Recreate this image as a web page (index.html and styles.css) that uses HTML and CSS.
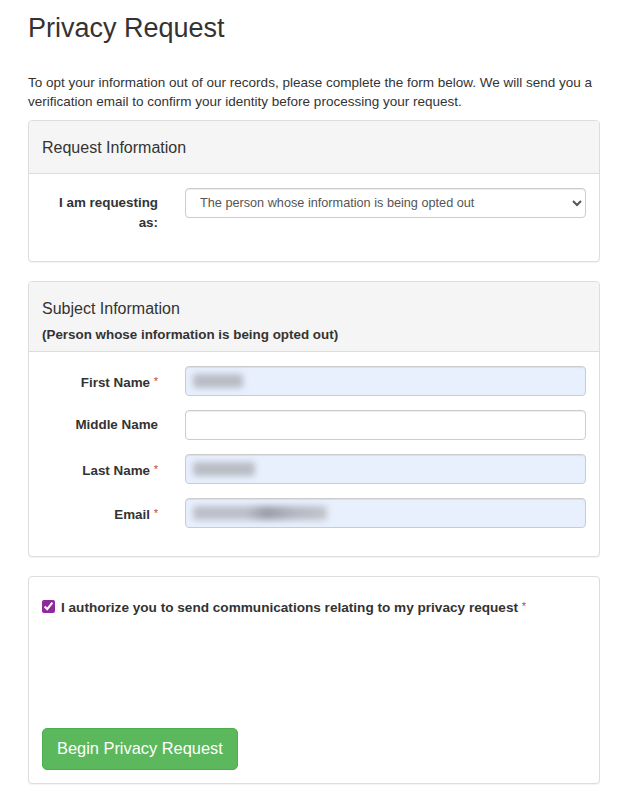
FILE: index.html
```html
<!DOCTYPE html>
<html lang="en">
<head>
<meta charset="utf-8">
<title>Privacy Request</title>
<link rel="stylesheet" href="styles.css">
</head>
<body>
<main class="page">
  <h2 class="page-title">Privacy Request</h2>
  <p class="intro">To opt your information out of our records, please complete the form below. We will send you a verification email to confirm your identity before processing your request.</p>

  <section class="panel">
    <div class="panel-heading">
      <h3 class="panel-title">Request Information</h3>
    </div>
    <div class="panel-body">
      <div class="form-group">
        <label class="control-label" for="requester">I am requesting as:</label>
        <select id="requester" class="form-control select">
          <option>The person whose information is being opted out</option>
        </select>
      </div>
    </div>
  </section>

  <section class="panel">
    <div class="panel-heading with-sub">
      <h3 class="panel-title">Subject Information</h3>
      <div class="panel-sub">(Person whose information is being opted out)</div>
    </div>
    <div class="panel-body">
      <div class="form-group">
        <label class="control-label">First Name <span class="req">*</span></label>
        <div class="form-control filled"><span class="blur b-first"></span></div>
      </div>
      <div class="form-group">
        <label class="control-label" for="middle">Middle Name</label>
        <input id="middle" class="form-control" type="text">
      </div>
      <div class="form-group">
        <label class="control-label">Last Name <span class="req">*</span></label>
        <div class="form-control filled"><span class="blur b-last"></span></div>
      </div>
      <div class="form-group">
        <label class="control-label">Email <span class="req">*</span></label>
        <div class="form-control filled"><span class="blur b-email"></span></div>
      </div>
    </div>
  </section>

  <section class="panel">
    <div class="panel-body consent">
      <label class="checkbox">
        <input type="checkbox" checked>
        <span>I authorize you to send communications relating to my privacy request <span class="req">*</span></span>
      </label>
      <div class="captcha-slot"></div>
      <button class="btn-success" type="button">Begin Privacy Request</button>
    </div>
  </section>
</main>
</body>
</html>
```

FILE: styles.css
```css
* { box-sizing: border-box; }

html, body {
  margin: 0;
  padding: 0;
  background: #fff;
}

body {
  font-family: "Liberation Sans", Arial, Helvetica, sans-serif;
  font-size: 13.5px;
  line-height: 19px;
  color: #333;
}

.page {
  width: 572px;
  margin: 0 0 0 28px;
  padding-top: 14px;
  padding-bottom: 14px;
}

.page-title {
  margin: 0;
  font-size: 27px;
  font-weight: 400;
  line-height: 1.1;
  color: #333;
}

.intro {
  margin: 29px 0 9px;
  font-size: 13.5px;
  line-height: 19px;
}

.panel {
  border: 1px solid #ddd;
  border-radius: 4px;
  background: #fff;
  margin-bottom: 19px;
  box-shadow: 0 1px 1px rgba(0,0,0,0.05);
}
.panel:last-child { margin-bottom: 0; }

.panel-heading {
  background: #f5f5f5;
  border-bottom: 1px solid #ddd;
  border-radius: 3px 3px 0 0;
  padding: 18px 13px 17px;
}
.panel-heading.with-sub { padding-bottom: 8px; }

.panel-title {
  margin: 0;
  font-size: 16px;
  font-weight: 400;
  line-height: 17.6px;
  color: #333;
}

.panel-sub {
  margin-top: 9px;
  font-size: 13.4px;
  font-weight: 700;
  line-height: 16px;
}

.panel-body {
  padding: 14px 13px;
}

.form-group {
  display: grid;
  grid-template-columns: 116px 1fr;
  column-gap: 27px;
  align-items: start;
  margin-bottom: 14px;
}

.control-label {
  text-align: right;
  font-weight: 700;
  font-size: 13.4px;
  line-height: 20px;
  padding-top: 5px;
  color: #333;
}

.req {
  color: #b94a48;
  font-size: 11px;
  font-weight: 400;
  vertical-align: 2px;
}

.form-control {
  display: block;
  width: 100%;
  height: 30px;
  margin: 0;
  padding: 4px 10px;
  font-family: "Liberation Sans", Arial, Helvetica, sans-serif;
  font-size: 12.7px;
  color: #555;
  background: #fff;
  border: 1px solid #ccc;
  border-radius: 4px;
  box-shadow: inset 0 1px 1px rgba(0,0,0,0.075);
}

.select {
  padding: 4px 10px;
}

.form-control.filled {
  background: #e8f0fe;
  display: flex;
  align-items: center;
  padding-left: 7px;
}

.blur {
  display: block;
  height: 14px;
  border-radius: 3px;
  background: #b9bcc4;
  filter: blur(3px);
}
.b-first { width: 50px; }
.b-last { width: 62px; }
.b-email {
  width: 134px;
  background: linear-gradient(90deg, #bcbfc8 0%, #bcbfc8 40%, #9a9da6 55%, #b4b7c0 75%, #c2c5cd 100%);
}

.consent {
  padding-top: 19px;
  padding-bottom: 13px;
}

.checkbox {
  display: flex;
  align-items: center;
  gap: 6px;
  font-weight: 700;
  font-size: 13.6px;
  line-height: 20px;
}
.checkbox input {
  margin: 0;
  width: 13px;
  height: 13px;
  accent-color: #8e2a9b;
}

.captcha-slot {
  height: 110px;
}

.btn-success {
  display: inline-block;
  height: 42px;
  padding: 0 14px;
  font-family: "Liberation Sans", Arial, Helvetica, sans-serif;
  font-size: 16.4px;
  color: #fff;
  background: #5cb85c;
  border: 1px solid #4cae4c;
  border-radius: 5px;
  cursor: pointer;
}
```
